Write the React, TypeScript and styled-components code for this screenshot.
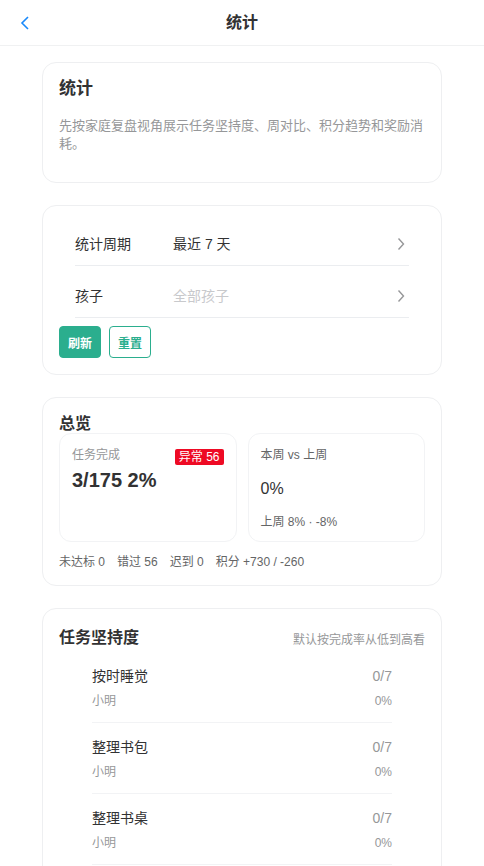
import styled, {createGlobalStyle} from 'styled-components';

const GlobalStyle = createGlobalStyle`
  body {
    margin: 0;
    background: #fff;
    font-family: "Liberation Sans", Arial, "Noto Sans CJK SC", sans-serif;
    color: #323233;
    -webkit-font-smoothing: antialiased;
  }
`

const NavBar = styled.header`
  position: relative;
  height: 45px;
  border-bottom: 1px solid #f0f1f2;
  display: flex;
  align-items: center;
  justify-content: center;
  background: #fff;
`

const BackButton = styled.button`
  position: absolute;
  left: 14px;
  top: 12px;
  width: 22px;
  height: 22px;
  padding: 0;
  border: 0;
  background: none;
  display: flex;
  align-items: center;
  justify-content: center;
`

const NavTitle = styled.h1`
  margin: 0;
  font-size: 16px;
  font-weight: 700;
  line-height: 22px;
  color: #323233;
`

const Page = styled.main`
  max-width: 400px;
  margin: 0 auto;
  padding: 16px 0 24px;
  display: flex;
  flex-direction: column;
  gap: 22px;
`

const Card = styled.section<{ $pad?: string }>`
  border: 1px solid #eeeff1;
  border-radius: 14px;
  background: #fff;
  padding: ${p => p.$pad ?? '16px'};
`

const PageTitle = styled.h2`
  margin: 0;
  font-size: 17px;
  font-weight: 700;
  line-height: 20px;
`

const Desc = styled.p`
  margin: 18px 0 13px;
  font-size: 13px;
  line-height: 18px;
  color: #969799;
`

const FieldList = styled.div`
  display: flex;
  flex-direction: column;
  gap: 8px;
  padding: 0 16px;
`

const Field = styled.div`
  display: flex;
  align-items: center;
  height: 43px;
  border-bottom: 1px solid #ebedf0;
  font-size: 14px;
  line-height: 24px;
`

const FieldLabel = styled.span`
  width: 98px;
  color: #323233;
`

const FieldValue = styled.span<{ $placeholder?: boolean }>`
  flex: 1;
  color: ${p => (p.$placeholder ? '#c8c9cc' : '#323233')};
`

const Chevron = () => (
  <svg width="16" height="16" viewBox="0 0 16 16">
    <polyline points="5.5,2.5 10.5,8 5.5,13.5" fill="none" stroke="#969799" strokeWidth="1.4" />
  </svg>
)

const Actions = styled.div`
  display: flex;
  gap: 8px;
  margin-top: 8px;
`

const Button = styled.button<{ $outline?: boolean }>`
  height: 32px;
  padding: 0 8px;
  border-radius: 4px;
  font-family: inherit;
  font-size: 12px;
  font-weight: 600;
  border: 1px solid #2bae8e;
  background: ${p => (p.$outline ? '#fff' : '#2bae8e')};
  color: ${p => (p.$outline ? '#2bae8e' : '#fff')};
`

const SectionTitle = styled.h3`
  margin: 0;
  font-size: 16px;
  font-weight: 700;
  line-height: 20px;
`

const SectionHead = styled.div`
  display: flex;
  justify-content: space-between;
  align-items: center;
  margin: 3px 0 0;
`

const Hint = styled.span`
  font-size: 12px;
  color: #969799;
`

const Tiles = styled.div`
  display: grid;
  grid-template-columns: 1fr 1fr;
  gap: 11px;
  margin-top: -1px;
`

const Tile = styled.div`
  height: 109px;
  box-sizing: border-box;
  border: 1px solid #f2f3f5;
  border-radius: 12px;
  padding: 11px 12px 10px;
  display: flex;
  flex-direction: column;
`

const TileHead = styled.div`
  display: flex;
  justify-content: space-between;
  align-items: center;
  height: 20px;
`

const TileLabel = styled.span<{ $dark?: boolean }>`
  font-size: 12px;
  line-height: 20px;
  color: ${p => (p.$dark ? '#646566' : '#969799')};
`

const Badge = styled.span`
  background: #ee0a24;
  color: #fff;
  font-size: 12px;
  line-height: 16px;
  padding: 0 4px;
  border-radius: 2px;
  margin-top: 3px;
`

const BigValue = styled.div`
  font-size: 20px;
  font-weight: 700;
  line-height: 28px;
  margin-top: 1px;
`

const Value = styled.div`
  font-size: 16px;
  line-height: 28px;
  margin-top: 10px;
`

const TileSub = styled.div`
  font-size: 12px;
  line-height: 20px;
  color: #646566;
  margin-top: 9px;
`

const Stats = styled.div`
  display: flex;
  gap: 12px;
  margin-top: 10px;
  font-size: 12px;
  line-height: 20px;
  color: #646566;
`

const TaskList = styled.div`
  margin-top: 4px;
  padding: 0 33px;
`

const TaskItem = styled.div`
  display: flex;
  justify-content: space-between;
  padding: 12px 0 12px;
  border-bottom: 1px solid #f2f3f5;
`

const TaskName = styled.div`
  font-size: 14px;
  line-height: 24px;
  color: #323233;
`

const TaskMeta = styled.div<{ $right?: boolean }>`
  font-size: 12px;
  line-height: 18px;
  margin-top: 4px;
  color: #969799;
  text-align: ${p => (p.$right ? 'right' : 'left')};
`

const TaskCount = styled.div`
  font-size: 14px;
  line-height: 24px;
  color: #969799;
  text-align: right;
`

const tasks = ['按时睡觉', '整理书包', '整理书桌']

export default function App() {
  return (
    <>
      <GlobalStyle />
      <NavBar>
        <BackButton aria-label="返回">
          <svg width="12" height="16" viewBox="0 0 12 16">
            <polyline points="9,2 3,8 9,14" fill="none" stroke="#1989fa" strokeWidth="1.6" />
          </svg>
        </BackButton>
        <NavTitle>统计</NavTitle>
      </NavBar>
      <Page>
        <Card>
          <PageTitle>统计</PageTitle>
          <Desc>先按家庭复盘视角展示任务坚持度、周对比、积分趋势和奖励消耗。</Desc>
        </Card>

        <Card>
          <FieldList>
            <Field>
              <FieldLabel>统计周期</FieldLabel>
              <FieldValue>最近 7 天</FieldValue>
              <Chevron />
            </Field>
            <Field>
              <FieldLabel>孩子</FieldLabel>
              <FieldValue $placeholder>全部孩子</FieldValue>
              <Chevron />
            </Field>
          </FieldList>
          <Actions>
            <Button>刷新</Button>
            <Button $outline>重置</Button>
          </Actions>
        </Card>

        <Card $pad="16px 16px 13px">
          <SectionTitle>总览</SectionTitle>
          <Tiles>
            <Tile>
              <TileHead>
                <TileLabel>任务完成</TileLabel>
                <Badge>异常 56</Badge>
              </TileHead>
              <BigValue>3/175 2%</BigValue>
            </Tile>
            <Tile>
              <TileHead>
                <TileLabel $dark>本周 vs 上周</TileLabel>
              </TileHead>
              <Value>0%</Value>
              <TileSub>上周 8% · -8%</TileSub>
            </Tile>
          </Tiles>
          <Stats>
            <span>未达标 0</span>
            <span>错过 56</span>
            <span>迟到 0</span>
            <span>积分 +730 / -260</span>
          </Stats>
        </Card>

        <Card>
          <SectionHead>
            <SectionTitle>任务坚持度</SectionTitle>
            <Hint>默认按完成率从低到高看</Hint>
          </SectionHead>
          <TaskList>
            {tasks.map(name => (
              <TaskItem key={name}>
                <div>
                  <TaskName>{name}</TaskName>
                  <TaskMeta>小明</TaskMeta>
                </div>
                <div>
                  <TaskCount>0/7</TaskCount>
                  <TaskMeta $right>0%</TaskMeta>
                </div>
              </TaskItem>
            ))}
          </TaskList>
        </Card>
      </Page>
    </>
  );
}
